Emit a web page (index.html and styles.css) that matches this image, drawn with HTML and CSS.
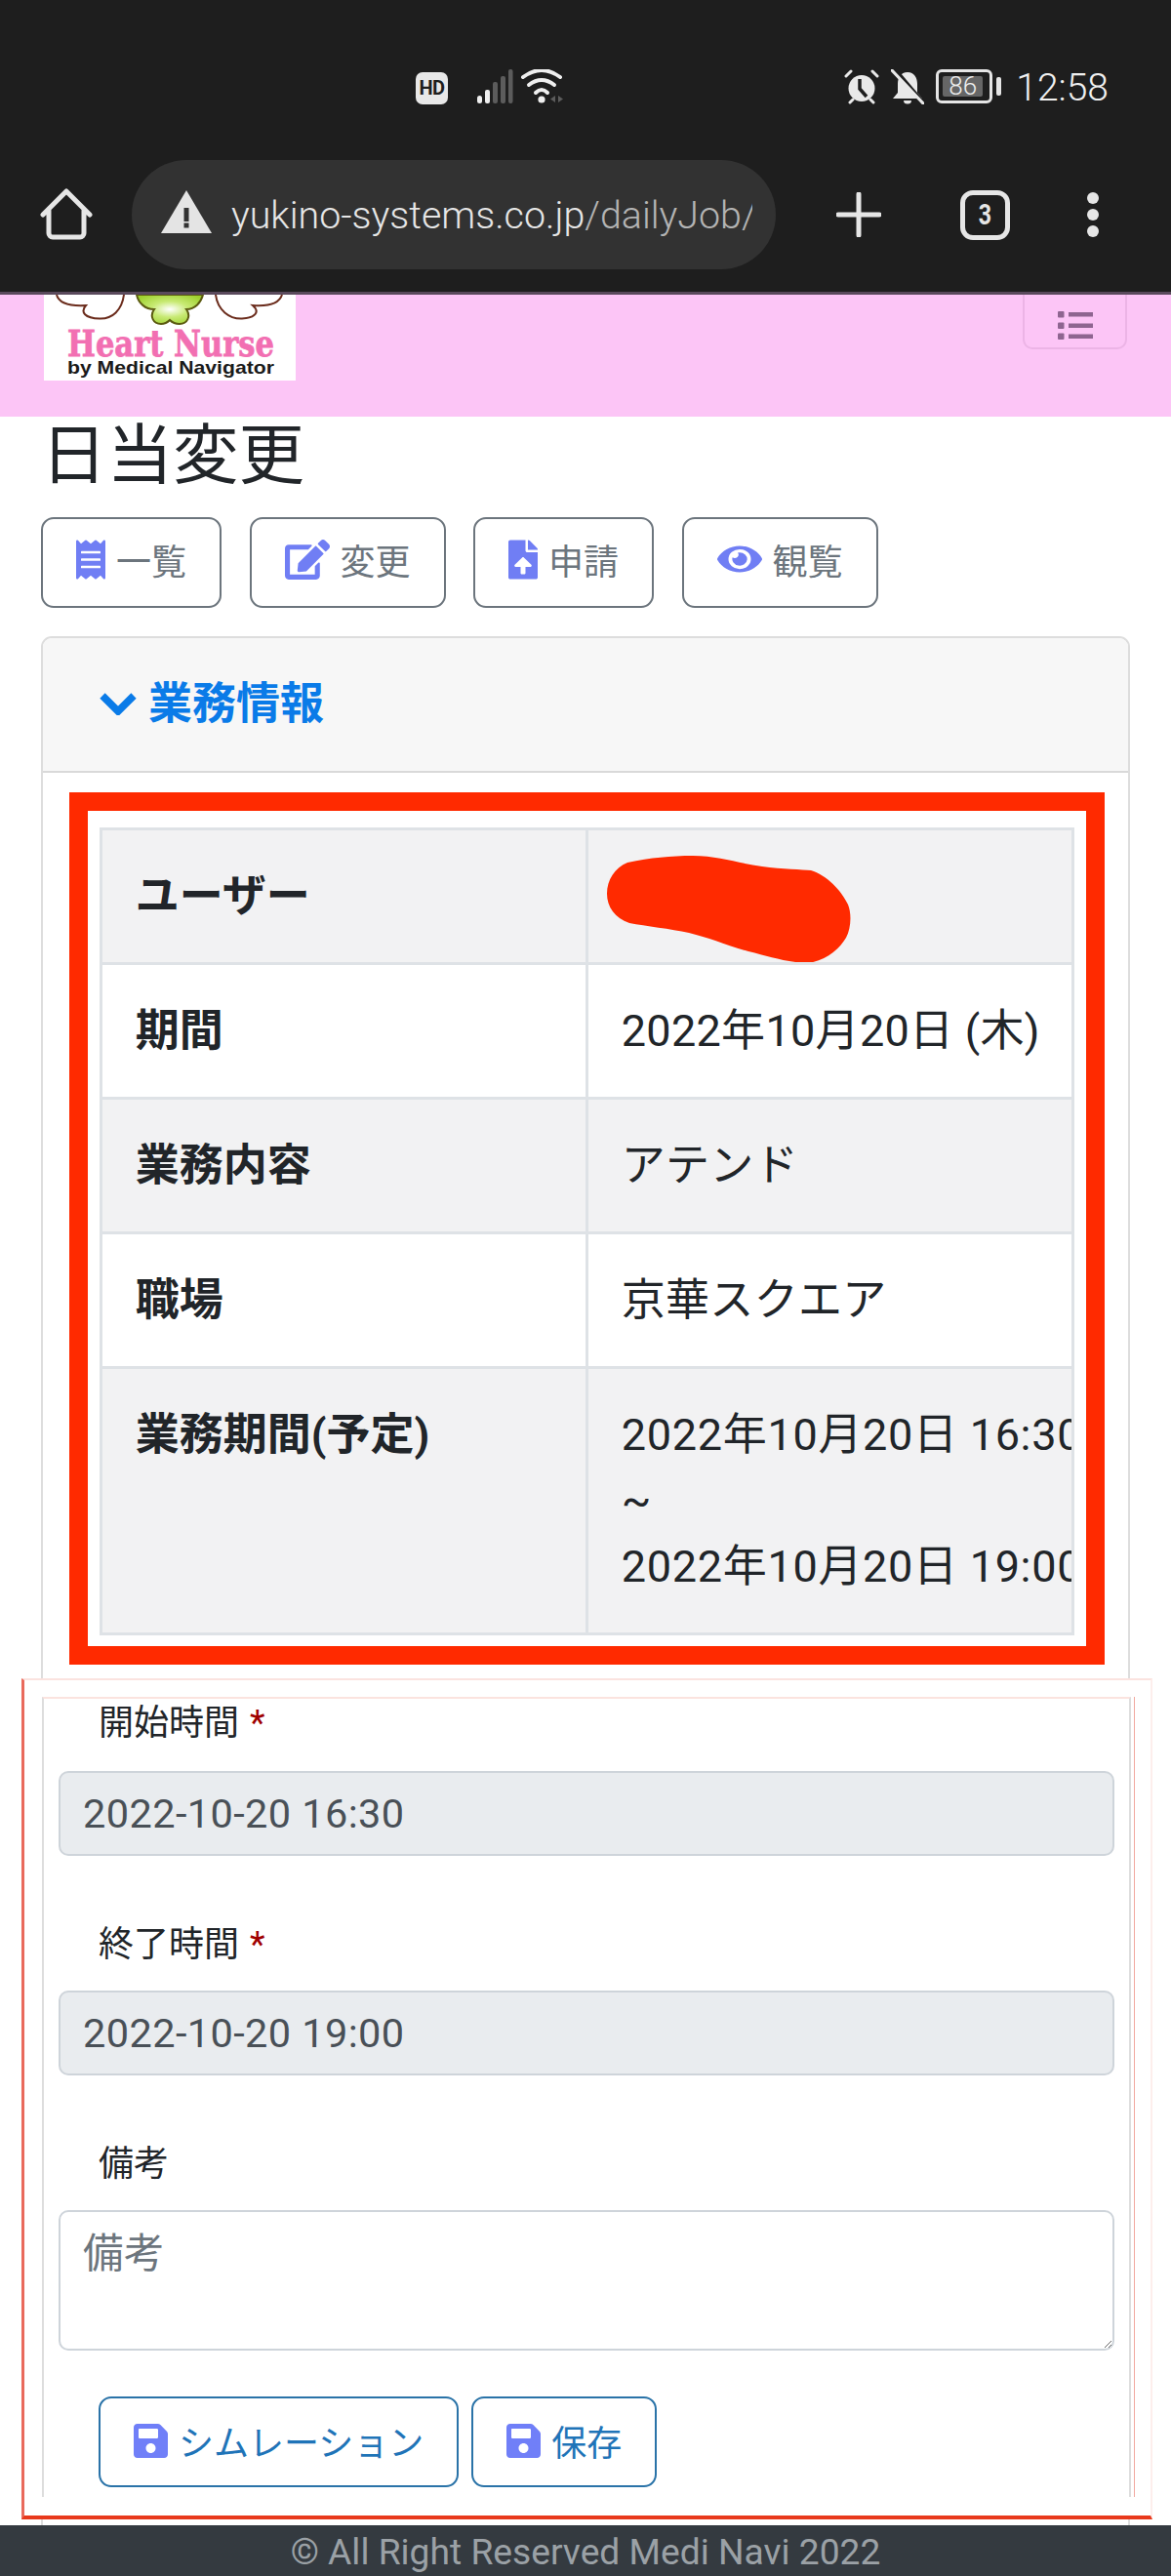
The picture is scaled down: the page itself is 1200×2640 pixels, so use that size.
FILE: index.html
```html
<!DOCTYPE html>
<html lang="ja">
<head>
<meta charset="utf-8">
<title>日当変更</title>
<link rel="stylesheet" href="styles.css">
</head>
<body>
<header class="chrome">
  <div class="status">
    <span class="hd">HD</span>
    <svg class="net" viewBox="0 0 90 36" width="90" height="36">
      <g class="bar-on"><rect x="0" y="27" width="5" height="8" rx="2.5"/><rect x="8" y="21" width="5" height="14" rx="2"/></g>
      <g class="bar-off"><rect x="16" y="13" width="5" height="22" rx="2"/><rect x="24" y="7" width="5" height="28" rx="2"/><rect x="32" y="0" width="4.500" height="35" rx="2"/></g>
      <g class="wifi"><path d="M47 8Q66-6 85 8"/><path d="M53 16Q66 6 79 16"/><path d="M60 24Q66 18 72 24"/></g>
      <circle class="wifi-dot" cx="66" cy="31" r="3.600"/>
      <path class="bar-off" d="M80 27V34L75 30.500ZM83 27V34L88 30.500Z"/>
    </svg>
    <div class="status-right">
      <svg class="st-icon" viewBox="0 0 36 36" width="36" height="36">
        <circle class="st-fill" cx="18" cy="19.500" r="13.500"/>
        <path class="st-line" d="M2 7L7 2M29 2L34 7M6 34L9 31M30 34L27 31"/>
        <path class="st-hand" d="M16 10V20L23 28"/>
      </svg>
      <svg class="st-icon bell" viewBox="0 0 34 36" width="34" height="36">
        <path class="st-fill" d="M17 3C24 3 27 9 27 15V24L32 30H2L7 24V15C7 9 10 3 17 3Z"/>
        <path class="st-hand wide" d="M4 0L32 33"/>
        <path class="st-line" d="M1 1L33 35"/>
        <path class="st-fill" d="M13 32H21A4 3.500 0 0 1 13 32Z"/>
      </svg>
      <span class="battery"><span class="battery-fill">86</span></span>
      <span class="nub"></span>
      <span class="clock">12:58</span>
    </div>
  </div>
  <div class="toolbar">
    <svg class="home" viewBox="0 0 54 54" width="54" height="54">
      <path d="M3 27L27 3L51 27M9 21V46A4 4 0 0 0 13 50H41A4 4 0 0 0 45 46V21"/>
    </svg>
    <div class="omnibox">
      <svg class="warn" viewBox="0 0 52 44" width="52" height="44">
        <path class="warn-tri" d="M26 0L52 44H0Z"/>
        <rect class="warn-mark" x="23.500" y="18" width="5" height="14"/>
        <rect class="warn-mark" x="23.500" y="33.500" width="5" height="5"/>
      </svg>
      <span class="url"><span class="url-host">yukino-systems.co.jp</span>/dailyJob/2022</span>
    </div>
    <svg class="plus" viewBox="0 0 46 46" width="46" height="46"><path d="M23 2V44M2 23H44"/></svg>
    <span class="tabs"><span class="tabs-n">3</span></span>
    <span class="dots"><i></i><i></i><i></i></span>
  </div>
</header>

<nav class="navbar">
  <svg class="logo" viewBox="0 0 258 88" width="258" height="88">
    <defs>
      <radialGradient id="leaf" cx="0.5" cy="0.5" r="0.6"><stop offset="0" stop-color="#ffffff"/><stop offset="0.45" stop-color="#c8ea74"/><stop offset="1" stop-color="#9ed02e"/></radialGradient>
    </defs>
    <rect class="logo-bg" width="258" height="88"/>
    <path class="petal" d="M13 0C15 8 24 12 43 11C37 18 42 24 57 24.500C70 25 80 16 82 0"/>
    <path class="petal" d="M176 0C178 16 190 25 203 24.500C216 24 222 18 214 11C228 12 241 10 244 0"/>
    <path class="clover" fill="url(#leaf)" d="M95 0C97 9 104 15 113 15C108 22 112 30 120 30C124 30 127 28 129 26C131 28 135 30 139 30C147 30 151 22 146 15C155 15 161 8 163 0Z"/>
    <text class="logo-title" x="24" y="63" textLength="212" lengthAdjust="spacingAndGlyphs">Heart Nurse</text>
    <text class="logo-sub" x="24" y="81" textLength="212" lengthAdjust="spacingAndGlyphs">by Medical Navigator</text>
  </svg>
  <button class="toggler" type="button" aria-label="menu">
    <svg viewBox="0 0 36 30" width="36" height="30">
      <rect x="0" y="0" width="6.500" height="6.500" rx="1"/><rect x="11" y="1" width="25" height="4.500"/>
      <rect x="0" y="11.500" width="6.500" height="6.500" rx="1"/><rect x="11" y="12.500" width="25" height="4.500"/>
      <rect x="0" y="22.500" width="6.500" height="6.500" rx="1"/><rect x="11" y="23.500" width="25" height="4.500"/>
    </svg>
  </button>
</nav>

<main class="page">
  <h1 class="title">日当変更</h1>
  <div class="actions">
    <a class="btn">
      <svg class="ico ico-list" viewBox="0 0 384 512"><path d="M358.400 3.200L320 48 265.600 3.200a15.900 15.900 0 0 0-19.200 0L192 48 137.600 3.200a15.900 15.900 0 0 0-19.200 0L64 48 25.600 3.200C15-4.700 0 2.800 0 16v480c0 13.200 15 20.700 25.600 12.800L64 464l54.400 44.800a15.900 15.900 0 0 0 19.200 0L192 464l54.400 44.800a15.900 15.900 0 0 0 19.200 0L320 464l38.400 44.800c10.500 7.900 25.600.4 25.600-12.800V16c0-13.200-15-20.700-25.600-12.800zM320 360c0 4.400-3.600 8-8 8H72c-4.400 0-8-3.600-8-8v-16c0-4.400 3.600-8 8-8h240c4.400 0 8 3.600 8 8v16zm0-96c0 4.400-3.600 8-8 8H72c-4.400 0-8-3.600-8-8v-16c0-4.400 3.600-8 8-8h240c4.400 0 8 3.600 8 8v16zm0-96c0 4.400-3.600 8-8 8H72c-4.400 0-8-3.600-8-8v-16c0-4.400 3.600-8 8-8h240c4.400 0 8 3.600 8 8v16z"/></svg>
      一覧
    </a>
    <a class="btn">
      <svg class="ico ico-edit" viewBox="0 0 576 512"><path d="M402.600 83.200l90.200 90.200c3.800 3.800 3.800 10 0 13.800L274.400 405.600l-92.800 10.300c-12.400 1.400-22.900-9.100-21.500-21.500l10.300-92.800L388.800 83.200c3.800-3.800 10-3.800 13.800 0zm162-22.900l-48.800-48.800c-15.200-15.200-39.900-15.200-55.200 0l-35.400 35.400c-3.800 3.800-3.800 10 0 13.800l90.200 90.200c3.800 3.800 10 3.800 13.800 0l35.400-35.400c15.200-15.300 15.200-40 0-55.200zM384 346.200V448H64V128h229.800c3.200 0 6.200-1.300 8.500-3.500l40-40c7.600-7.600 2.200-20.500-8.500-20.500H48C21.500 64 0 85.500 0 112v352c0 26.500 21.500 48 48 48h352c26.500 0 48-21.500 48-48V306.200c0-10.700-12.900-16-20.500-8.500l-40 40c-2.200 2.300-3.500 5.300-3.500 8.500z"/></svg>
      変更
    </a>
    <a class="btn">
      <svg class="ico ico-list" viewBox="0 0 384 512"><path d="M224 136V0H24C10.700 0 0 10.700 0 24v464c0 13.300 10.700 24 24 24h336c13.300 0 24-10.700 24-24V160H248c-13.200 0-24-10.800-24-24zm65.180 216.010H224v80c0 8.840-7.160 16-16 16h-32c-8.840 0-16-7.160-16-16v-80H94.820c-14.280 0-21.410-17.290-11.270-27.360l96.420-95.700c6.650-6.610 17.390-6.610 24.040 0l96.420 95.700c10.150 10.070 3.030 27.360-11.250 27.360zM377 105L279.100 7c-4.500-4.500-10.600-7-17-7H256v128h128v-6.100c0-6.300-2.500-12.400-7-16.900z"/></svg>
      申請
    </a>
    <a class="btn">
      <svg class="ico ico-eye" viewBox="0 0 576 512" preserveAspectRatio="none"><path d="M572.520 241.400C518.290 135.590 410.930 64 288 64S57.680 135.640 3.480 241.410a32.350 32.350 0 0 0 0 29.190C57.710 376.410 165.070 448 288 448s230.320-71.640 284.520-177.410a32.350 32.350 0 0 0 0-29.190zM288 400a144 144 0 1 1 144-144 143.930 143.930 0 0 1-144 144zm0-240a95.310 95.310 0 0 0-25.310 3.790 47.850 47.850 0 0 1-66.900 66.900A95.780 95.780 0 1 0 288 160z"/></svg>
      観覧
    </a>
  </div>

  <section class="card">
    <div class="card-head">
      <svg class="chev" viewBox="0 0 38 24" width="38" height="24"><path d="M3 4L19 20L35 4"/></svg>
      <span class="card-title">業務情報</span>
    </div>
    <div class="card-body">
      <div class="mark-box">
        <table class="info">
          <tr class="odd"><th>ユーザー</th>
            <td class="masked">
              <svg class="scribble" viewBox="0 0 250 111" width="250" height="111"><path d="M21 7C45 2 65 0 88 0C115 0 135 8 159 11C180 14 200 14 209 15C225 20 240 35 247 50C251 60 250 75 245 84C238 96 222 110 202 110C180 108 165 103 145 98C120 91 105 84 84 79C65 75 40 72 23 69C8 64 0 52 0 39C0 25 8 12 21 7Z"/></svg>
            </td></tr>
          <tr><th>期間</th><td>2022年10月20日 (木)</td></tr>
          <tr class="odd"><th>業務内容</th><td>アテンド</td></tr>
          <tr><th>職場</th><td>京華スクエア</td></tr>
          <tr class="odd"><th>業務期間(予定)</th><td class="range">2022年10月20日 16:30<br>~<br>2022年10月20日 19:00</td></tr>
        </table>
      </div>

      <div class="mark-frame">
        <form class="form">
          <div class="group">
            <label class="label">開始時間<span class="req">*</span></label>
            <input class="control" type="text" value="2022-10-20 16:30" readonly>
          </div>
          <div class="group">
            <label class="label">終了時間<span class="req">*</span></label>
            <input class="control" type="text" value="2022-10-20 19:00" readonly>
          </div>
          <div class="group">
            <label class="label">備考</label>
            <textarea class="control area" placeholder="備考"></textarea>
          </div>
          <div class="submit">
            <a class="btn btn-save">
              <svg class="ico-save" viewBox="0 32 448 448"><path d="M433.941 129.941l-83.882-83.882A48 48 0 0 0 316.118 32H48C21.490 32 0 53.490 0 80v352c0 26.510 21.490 48 48 48h352c26.510 0 48-21.490 48-48V163.882a48 48 0 0 0-14.059-33.941zM224 416c-35.346 0-64-28.654-64-64 0-35.346 28.654-64 64-64s64 28.654 64 64c0 35.346-28.654 64-64 64zm96-304.520V212c0 6.627-5.373 12-12 12H76c-6.627 0-12-5.373-12-12V108c0-6.627 5.373-12 12-12h228.520c3.183 0 6.235 1.264 8.485 3.515l3.480 3.480A11.996 11.996 0 0 1 320 111.480z"/></svg>
              シムレーション
            </a>
            <a class="btn btn-save">
              <svg class="ico-save" viewBox="0 32 448 448"><path d="M433.941 129.941l-83.882-83.882A48 48 0 0 0 316.118 32H48C21.490 32 0 53.490 0 80v352c0 26.510 21.490 48 48 48h352c26.510 0 48-21.490 48-48V163.882a48 48 0 0 0-14.059-33.941zM224 416c-35.346 0-64-28.654-64-64 0-35.346 28.654-64 64-64s64 28.654 64 64c0 35.346-28.654 64-64 64zm96-304.520V212c0 6.627-5.373 12-12 12H76c-6.627 0-12-5.373-12-12V108c0-6.627 5.373-12 12-12h228.520c3.183 0 6.235 1.264 8.485 3.515l3.480 3.480A11.996 11.996 0 0 1 320 111.480z"/></svg>
              保存
            </a>
          </div>
        </form>
      </div>
    </div>
  </section>
</main>

<footer class="footer">© All Right Reserved Medi Navi 2022</footer>
</body>
</html>
```
FILE: styles.css
```css
* { box-sizing: border-box; }
html, body { margin: 0; padding: 0; }
body {
  width: 1200px;
  height: 2640px;
  display: flex;
  flex-direction: column;
  overflow: hidden;
  background: #fff;
  color: #212529;
  font-family: Roboto, "Noto Sans CJK JP", sans-serif;
}

/* browser chrome */
.chrome {
  height: 302px;
  flex: none;
  background: #1e1e1e;
  border-bottom: 3px solid #5a4a5c;
}
.status {
  height: 164px;
  padding: 71px 64px 0 426px;
  display: flex;
  align-items: flex-start;
}
.hd {
  width: 33px;
  height: 33px;
  margin-top: 3px;
  border-radius: 7px;
  background: #e8e8e8;
  color: #1e1e1e;
  font-size: 20px;
  font-weight: 700;
  line-height: 33px;
  text-align: center;
  letter-spacing: -0.5px;
}
.net { margin-left: 30px; }
.bar-on { fill: #efefef; }
.bar-off { fill: #5c5c5c; }
.wifi { fill: none; stroke: #efefef; stroke-width: 4; stroke-linecap: round; }
.wifi-dot { fill: #efefef; }
.status-right { margin-left: auto; display: flex; align-items: flex-start; }
.st-icon { display: block; }
.st-fill { fill: #e9e9e9; }
.st-line { fill: none; stroke: #e9e9e9; stroke-width: 3; stroke-linecap: round; }
.st-hand { fill: none; stroke: #1e1e1e; stroke-width: 3.500; }
.st-hand.wide { stroke-width: 4; }
.bell { margin-left: 12px; }
.battery {
  width: 58px;
  height: 35px;
  margin-left: 12px;
  padding: 4px 7px 4px 4px;
  border: 3px solid #e5e5e5;
  border-radius: 6px;
}
.battery-fill {
  display: block;
  height: 21px;
  border-radius: 2px;
  background: #666;
  color: #eee;
  font-size: 26px;
  font-weight: 300;
  line-height: 21px;
  text-align: center;
}
.nub {
  width: 5px;
  height: 19px;
  margin: 8px 0 0 4px;
  border-radius: 2px;
  background: #e5e5e5;
}
.clock {
  margin-left: 15px;
  color: #f0f0f0;
  font-size: 39px;
  font-weight: 300;
  line-height: 36px;
  margin-top: 1px;
}
.toolbar {
  height: 112px;
  padding-left: 41px;
  display: flex;
  align-items: center;
}
.home { fill: none; stroke: #e6e6e6; stroke-width: 5; stroke-linejoin: round; stroke-linecap: round; flex: none; }
.omnibox {
  width: 660px;
  height: 112px;
  margin-left: 40px;
  padding: 0 24px 0 30px;
  border-radius: 56px;
  background: #323232;
  display: flex;
  align-items: center;
  flex: none;
}
.warn { flex: none; margin-top: -6px; }
.warn-tri { fill: #e4e4e4; }
.warn-mark { fill: #323232; }
.url {
  width: 534px;
  margin-left: 20px;
  overflow: hidden;
  white-space: nowrap;
  color: #b4b4b4;
  font-size: 39.400px;
  font-weight: 300;
  flex: none;
}
.url-host { color: #e6e6e6; }
.plus { margin-left: 62px; fill: none; stroke: #e6e6e6; stroke-width: 5; stroke-linecap: round; flex: none; }
.tabs {
  width: 51px;
  height: 51px;
  margin-left: 81px;
  border: 5px solid #e6e6e6;
  border-radius: 13px;
  display: flex;
  align-items: center;
  justify-content: center;
  flex: none;
}
.tabs-n {
  color: #e6e6e6;
  font-size: 29px;
  font-weight: 700;
  transform: scaleX(0.8);
}
.dots {
  margin-left: 79px;
  display: flex;
  flex-direction: column;
  gap: 5px;
  flex: none;
}
.dots i { display: block; width: 12px; height: 12px; border-radius: 50%; background: #e6e6e6; }

/* navbar */
.navbar {
  height: 125px;
  flex: none;
  padding: 0 45px;
  background: #fcc5f6;
  display: flex;
  justify-content: space-between;
  align-items: flex-start;
  overflow: hidden;
}
.logo { display: block; }
.logo-bg { fill: #fff; }
.petal { fill: #fff; stroke: #6b2c1c; stroke-width: 2; }
.clover { stroke: #5b5a10; stroke-width: 2; }
.logo-title {
  fill: #f26fb2;
  stroke: #f26fb2;
  stroke-width: 0.8;
  font-family: "DejaVu Serif", serif;
  font-size: 38px;
  font-weight: 700;
}
.logo-sub {
  fill: #1a1a1a;
  font-family: "Liberation Sans", sans-serif;
  font-size: 19px;
  font-weight: 700;
}
.toggler {
  width: 107px;
  height: 56px;
  padding: 9px 0 0;
  background: transparent;
  border: 2px solid #ecb4e6;
  border-top: 0;
  border-radius: 0 0 10px 10px;
}
.toggler svg { display: block; margin: 0 auto; fill: #8e6590; }

/* page */
.page {
  flex: 1;
  min-height: 0;
  padding: 0 42px;
  overflow: hidden;
}
.title {
  margin: 5px 0 28px;
  height: 70px;
  font-size: 67.500px;
  font-weight: 400;
  line-height: 70px;
}
.actions { display: flex; gap: 28.500px; margin-bottom: 29px; }
.btn {
  height: 93px;
  padding: 0 34px 7px;
  border: 2px solid #6c757d;
  border-radius: 13px;
  color: #6c757d;
  font-size: 36px;
  display: flex;
  align-items: center;
  gap: 11px;
}
.ico { fill: #707ef4; height: 41px; display: block; flex: none; }
.ico-list { width: 30px; }
.ico-edit { width: 46px; }
.ico-eye { width: 46px; height: 36px; }

.card {
  border: 2px solid #ddd;
  border-radius: 11px;
  padding-bottom: 20px;
}
.card-head {
  height: 138px;
  padding-left: 58px;
  background: #f7f7f7;
  border-bottom: 2px solid #d9d9d9;
  border-radius: 9px 9px 0 0;
  color: #0a7be8;
  font-size: 45px;
  font-weight: 700;
  display: flex;
  align-items: center;
  gap: 12px;
}
.card-title { margin-top: -10px; }
.chev { fill: none; stroke: #0a7be8; stroke-width: 7.500; flex: none; margin-top: -2px; }
.card-body { padding: 20px 24px 0 27px; }

/* annotated table */
.mark-box {
  margin-bottom: 13.500px;
  border: solid #ff2a00;
  border-width: 19px;
  padding: 17px 12px 11px 12px;
}
.info {
  width: 100%;
  table-layout: fixed;
  border-collapse: collapse;
  font-size: 45px;
  line-height: 67.500px;
}
.info th, .info td {
  padding: 33.750px;
  border: 3px solid #dee2e6;
  text-align: left;
  vertical-align: top;
  white-space: nowrap;
  overflow: hidden;
}
.info th { font-weight: 700; }
.info td { font-weight: 400; letter-spacing: 0.3px; }
.info td.range { letter-spacing: 0.7px; }
.info .odd th, .info .odd td { background: #f2f2f3; }
.masked { position: relative; height: 138px; }
.scribble { position: absolute; left: 19px; top: 26px; fill: #ff2a00; }

/* annotated form */
.mark-frame {
  margin: 0 -49px;
  padding: 17px 20px 19.500px 18px;
  background: #fff;
  border-left: 3px solid #e96a5c;
  border-right: 2px solid #fdeeec;
  border-top: 2px solid #fbe3df;
  border-bottom: 4px solid #e8391c;
}
.form {
  padding: 0 15px 10px;
  border-left: 2px solid #ddd;
  border-right: 2px solid #ddd;
  border-top: 2px solid #fbe3df;
  box-shadow: 3px 0 0 #fff, 4px 0 0 #f2a9a0;
}
.group { margin-bottom: 64px; }
.label {
  display: block;
  margin: 0 0 20px 41px;
  font-size: 36px;
  line-height: 54px;
}
.group:first-child .label { margin: -2px 0 22px 41px; }
.req { margin-left: 11px; color: #a00000; }
.control {
  display: block;
  width: 100%;
  height: 87px;
  padding: 0 23px;
  border: 2px solid #ced4da;
  border-radius: 10px;
  background: #e9ecef;
  color: #495057;
  font-family: inherit;
  font-size: 41.500px;
  letter-spacing: 0.4px;
  outline: none;
}
.area {
  height: 144px;
  padding: 12px 23px;
  background: #fff;
  line-height: 1.500;
}
.area::placeholder { color: #6c757d; opacity: 1; }
.group:nth-child(3) { margin-bottom: 47px; }
.submit { margin-left: 41px; display: flex; gap: 13px; }
.btn-save {
  height: 93px;
  padding: 0 34px 2px;
  border-color: #2a73a8;
  color: #1f74b8;
  gap: 11px;
}
.ico-save { width: 35px; height: 35px; fill: #707ff8; flex: none; }

.footer {
  height: 52px;
  flex: none;
  background: #343a40;
  color: #9ba1a6;
  font-size: 37.200px;
  line-height: 54px;
  text-align: center;
}
```
